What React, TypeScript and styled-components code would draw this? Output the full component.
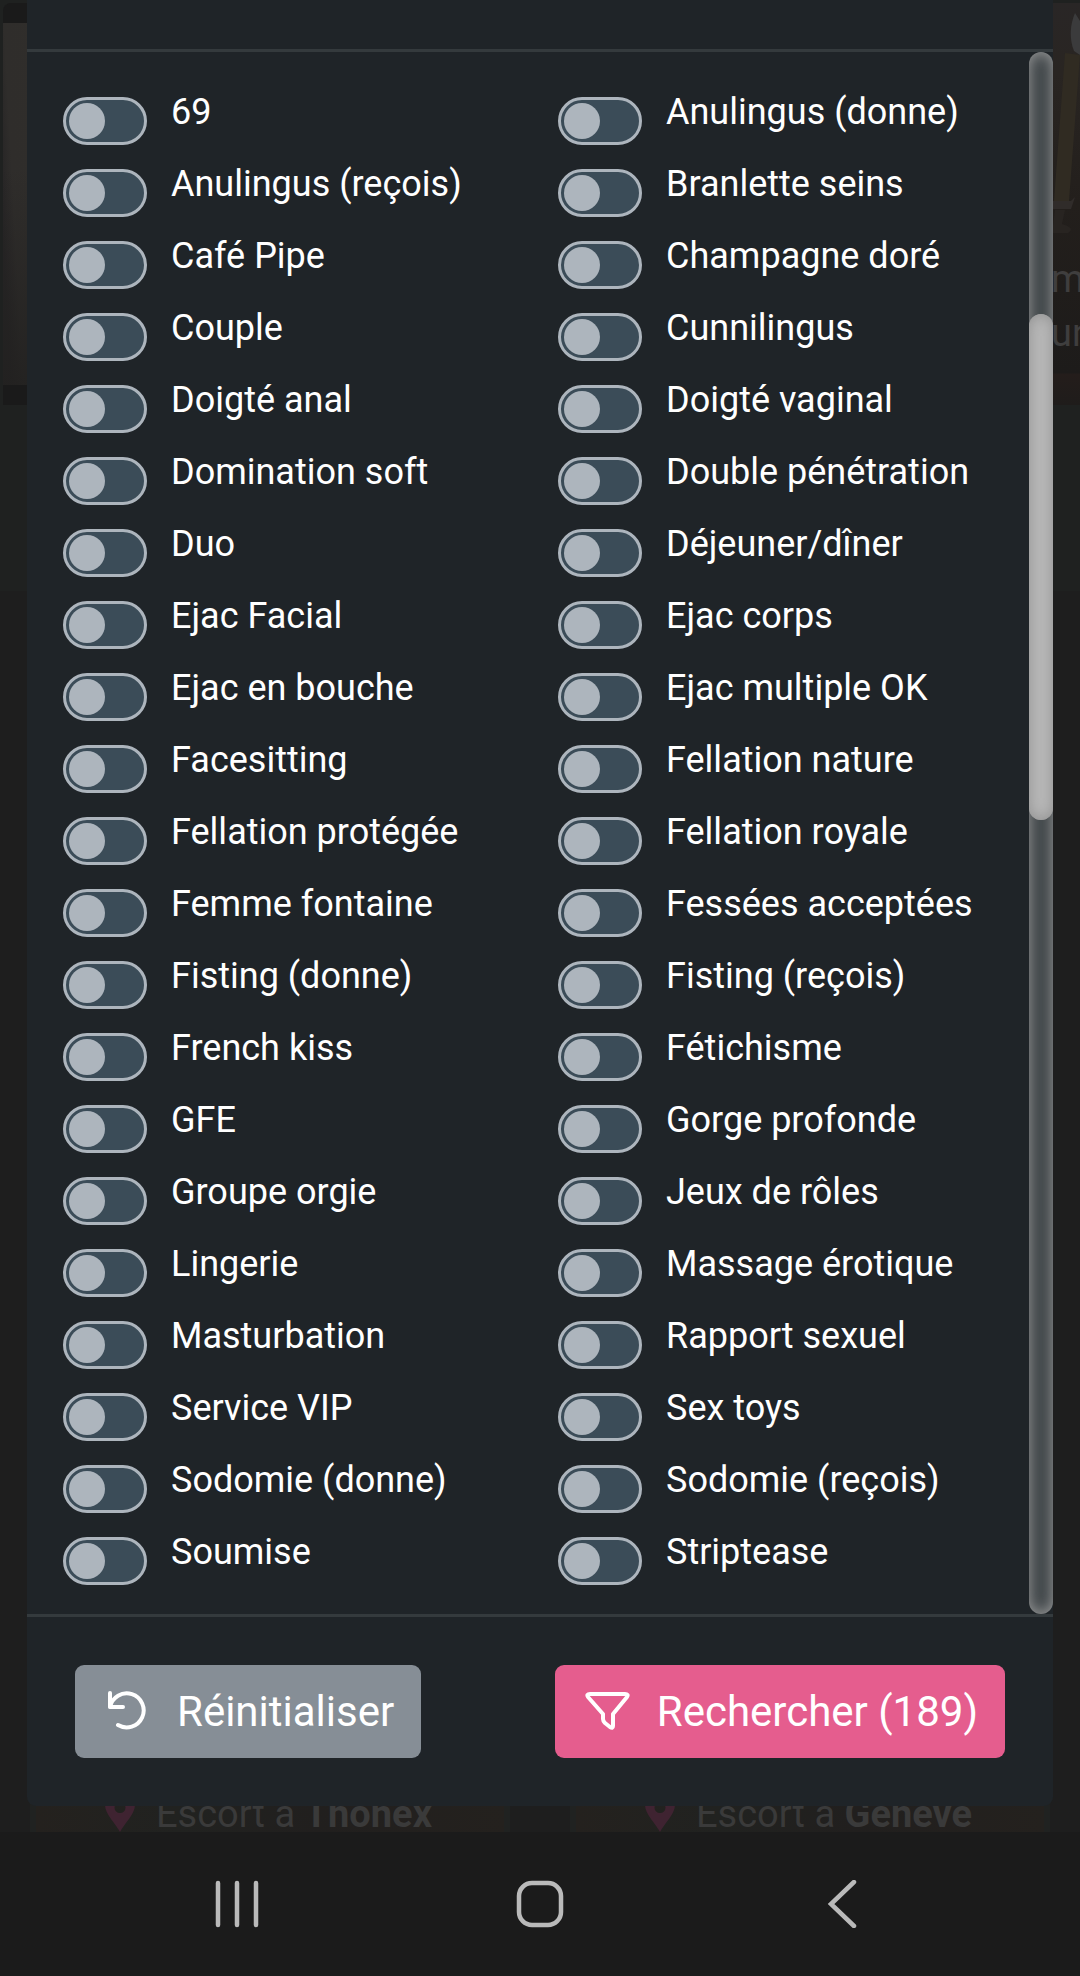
import React from "react";
import styled, { createGlobalStyle } from "styled-components";

const GlobalStyle = createGlobalStyle`
  *, *::before, *::after { box-sizing: border-box; }
  html, body, #root { height: 100%; margin: 0; }
  body { background: #1c1c1c; color: #fff; font-family: Roboto, "Liberation Sans", sans-serif; }
  button { font-family: inherit; border: 0; cursor: pointer; }
`;

const Screen = styled.div`
  display: flex;
  flex-direction: column;
  min-height: 100vh;
`;

const Viewport = styled.div`
  position: relative;
  display: flex;
  flex: 1;
  flex-direction: column;
  padding: 0 27px 26px;
  overflow: hidden;
`;

const Backdrop = styled.div`
  position: absolute;
  inset: 0;
  background: linear-gradient(#1f2120 0, #1f2120 591px, #1e1e1e 591px);
`;

const LeftPhoto = styled.div`
  position: absolute;
  left: 3px;
  top: 3px;
  width: 60px;
  height: 402px;
  border-radius: 8px 0 0 0;
  border-top: 20px solid #1a1a1a;
  border-bottom: 20px solid #1a1a1a;
  background:
    linear-gradient(transparent 40%, #222120e0),
    linear-gradient(87deg, #262425 8px, #2f2d2b 20px, #302e2b);
`;

const RightPhoto = styled.div`
  position: absolute;
  right: 0;
  top: 3px;
  width: 60px;
  height: 402px;
  overflow: hidden;
  background: linear-gradient(#292626 0, #292522 70px, #231f1c 200px, #1d1b1a 370px, #241d1b 371px, #1f1c1b);
  color: #3f3e3e;
  font-size: 38px;
  line-height: 54px;

  svg { position: absolute; right: 0; top: 0; }
  p { position: absolute; left: 31px; top: 249px; margin: 0; }
`;

const CityStrip = styled.div`
  position: absolute;
  left: 30px;
  right: 30px;
  bottom: 0;
  display: grid;
  grid-template-columns: 1fr 1fr;
  column-gap: 60px;
`;

const City = styled.div`
  display: flex;
  align-items: flex-end;
  gap: 21px;
  height: 48px;
  padding-left: 69px;
  border: solid #202221;
  border-width: 0 6px;
  background: linear-gradient(90deg, #24211e, #212220 30%, #211f1e 60%, #24211e);
  color: #3a3a3a;
  font-size: 38px;
  line-height: 36px;
  white-space: nowrap;

  svg { flex: none; }
`;

const Modal = styled.form`
  position: relative;
  display: flex;
  flex: 1;
  flex-direction: column;
  border-radius: 0 0 9px 9px;
  background: #1f2428;
`;

const Header = styled.header`
  height: 52px;
  border-bottom: 3px solid #343a3d;
`;

const Body = styled.div`
  display: flex;
  flex: 1;
`;

const Options = styled.div`
  display: grid;
  flex: 1;
  grid-template-columns: 1fr 1fr;
  align-content: start;
  margin-right: -24px;
  padding: 36px 0 14px 36px;
`;

const Option = styled.label`
  display: flex;
  align-items: flex-start;
  gap: 24px;
  height: 72px;
  font-size: 36px;
  line-height: 48px;
  white-space: nowrap;
  cursor: pointer;
`;

const Toggle = styled.input`
  appearance: none;
  flex: none;
  display: flex;
  align-items: center;
  width: 84px;
  height: 48px;
  margin: 9px 0 0;
  padding: 0 3px;
  border: 3px solid #adb5bd;
  border-radius: 24px;
  background: #3b4c58;
  cursor: pointer;

  &::before {
    content: "";
    width: 36px;
    height: 36px;
    border-radius: 50%;
    background: #adb5bd;
  }
  &:checked { justify-content: flex-end; background: #e55d8e; }
`;

const ScrollTrack = styled.div`
  position: relative;
  width: 24px;
  padding-top: 262px;
  border-radius: 12px;
  background: #3e4447;
  box-shadow: inset 0 0 15px #a0a0a0;
`;

const ScrollThumb = styled.div`
  height: 506px;
  border-radius: 12px;
  background: #b9b9b9;
  box-shadow: inset 0 0 15px #8f8f8f;
`;

const Footer = styled.footer`
  display: flex;
  justify-content: space-between;
  padding: 48px;
  border-top: 3px solid #343a3d;
`;

const ActionButton = styled.button<{ $primary?: boolean }>`
  display: flex;
  align-items: center;
  gap: 27px;
  height: 93px;
  padding: 0 27px;
  border-radius: 9px;
  background: ${(p) => (p.$primary ? "#e55d8e" : "#868e96")};
  color: #fff;
  font-size: 42px;
  line-height: 60px;
  white-space: nowrap;

  svg { flex: none; }
`;

const SystemBar = styled.nav`
  display: grid;
  grid-template-columns: 1fr 240px 1fr;
  align-items: center;
  height: 144px;
  padding: 0 54px;
  background: #1b1b1b;
`;

const SystemButton = styled.button`
  display: flex;
  justify-content: center;
  padding: 0;
  background: none;
  color: #bababa;
`;

const services = [
  "69", "Anulingus (donne)",
  "Anulingus (reçois)", "Branlette seins",
  "Café Pipe", "Champagne doré",
  "Couple", "Cunnilingus",
  "Doigté anal", "Doigté vaginal",
  "Domination soft", "Double pénétration",
  "Duo", "Déjeuner/dîner",
  "Ejac Facial", "Ejac corps",
  "Ejac en bouche", "Ejac multiple OK",
  "Facesitting", "Fellation nature",
  "Fellation protégée", "Fellation royale",
  "Femme fontaine", "Fessées acceptées",
  "Fisting (donne)", "Fisting (reçois)",
  "French kiss", "Fétichisme",
  "GFE", "Gorge profonde",
  "Groupe orgie", "Jeux de rôles",
  "Lingerie", "Massage érotique",
  "Masturbation", "Rapport sexuel",
  "Service VIP", "Sex toys",
  "Sodomie (donne)", "Sodomie (reçois)",
  "Soumise", "Striptease",
];

const Pin = () => (
  <svg width="30" height="42" viewBox="0 0 30 42" aria-hidden="true">
    <path fill="#3f2331" fillRule="evenodd" d="M15 42C11 34 0 24 0 15a15 15 0 0 1 30 0c0 9-11 19-15 27ZM15 12a5 5 0 1 0 0 11 5 5 0 0 0 0-11Z" />
  </svg>
);

const ResetIcon = () => (
  <svg width="48" height="42" viewBox="0 0 48 42" fill="none" stroke="currentColor" strokeWidth="4" strokeLinecap="round" strokeLinejoin="round" aria-hidden="true">
    <path d="M8 2v14h13M8 16A17 17 0 1 1 16 34" />
  </svg>
);

const FilterIcon = () => (
  <svg width="48" height="42" viewBox="0 0 48 42" fill="none" stroke="currentColor" strokeWidth="4" strokeLinejoin="round" aria-hidden="true">
    <path d="M8 3h35q4 0 2 3L31 23v12q0 3-3 1l-5-4q-2-2-2-4v-5L6 6q-2-3 2-3Z" />
  </svg>
);

const Candle = () => (
  <svg width="60" height="250" viewBox="0 0 60 250" aria-hidden="true">
    <path d="M55 10c-5 12-6 25-1 38l6 4V18Z" fill="#3b3b3c" />
    <path d="M45 50l15 2-11 146H34Z" fill="#302b22" />
    <path d="M31 198h20l4-4-4 12H31Z" fill="#302c2a" />
    <path d="M35 207h10l-3 14q14 4 6 9H32Z" fill="#282421" />
  </svg>
);

export default function App() {
  return (
    <Screen>
      <GlobalStyle />
      <Viewport>
        <Backdrop>
          <LeftPhoto />
          <RightPhoto>
            <Candle />
            <p>m<br />un</p>
          </RightPhoto>
          <CityStrip>
            <City><Pin /><span>Escort à <b>Thônex</b></span></City>
            <City><Pin /><span>Escort à <b>Genève</b></span></City>
          </CityStrip>
        </Backdrop>
        <Modal onSubmit={(e) => e.preventDefault()}>
          <Header />
          <Body>
            <Options>
              {services.map((name) => (
                <Option key={name}>
                  <Toggle type="checkbox" name={name} />
                  <span>{name}</span>
                </Option>
              ))}
            </Options>
            <ScrollTrack><ScrollThumb /></ScrollTrack>
          </Body>
          <Footer>
            <ActionButton type="reset"><ResetIcon />Réinitialiser</ActionButton>
            <ActionButton type="submit" $primary><FilterIcon />Rechercher (189)</ActionButton>
          </Footer>
        </Modal>
      </Viewport>
      <SystemBar>
        <SystemButton type="button" aria-label="Applications récentes">
          <svg width="48" height="48" viewBox="0 0 48 48" stroke="currentColor" strokeWidth="4.500" strokeLinecap="round">
            <path d="M5 3v42M24 3v42M43 3v42" />
          </svg>
        </SystemButton>
        <SystemButton type="button" aria-label="Accueil">
          <svg width="48" height="48" viewBox="0 0 48 48" fill="none" stroke="currentColor" strokeWidth="4.500">
            <rect x="3" y="3" width="42" height="42" rx="13" />
          </svg>
        </SystemButton>
        <SystemButton type="button" aria-label="Retour">
          <svg width="48" height="48" viewBox="0 0 48 48" fill="none" stroke="currentColor" strokeWidth="4.500" strokeLinecap="round">
            <path d="M35 2L12 24l23 22" />
          </svg>
        </SystemButton>
      </SystemBar>
    </Screen>
  );
}
